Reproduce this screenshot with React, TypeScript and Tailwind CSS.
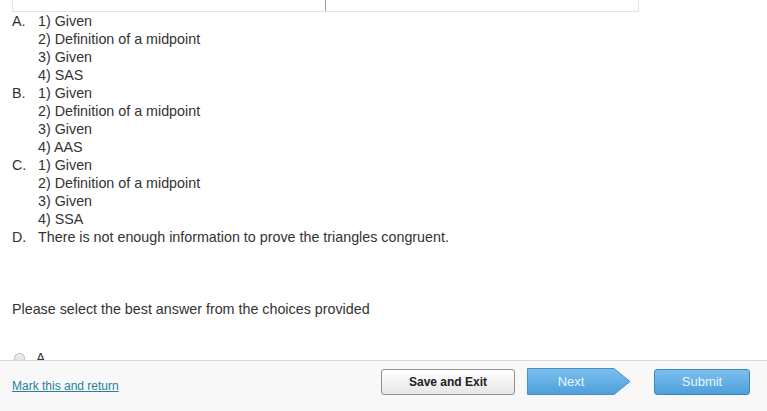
const choices = [
  { letter: "A.", lines: ["1) Given", "2) Definition of a midpoint", "3) Given", "4) SAS"] },
  { letter: "B.", lines: ["1) Given", "2) Definition of a midpoint", "3) Given", "4) AAS"] },
  { letter: "C.", lines: ["1) Given", "2) Definition of a midpoint", "3) Given", "4) SSA"] },
  { letter: "D.", lines: ["There is not enough information to prove the triangles congruent."] },
];

function NextButton() {
  return (
    <button className="relative w-[104px] h-[27px] text-[13px] text-[#eaf5ff] cursor-pointer">
      <svg className="absolute inset-0" width="104" height="27" viewBox="0 0 104 27">
        <defs>
          <linearGradient id="nextGrad" x1="0" y1="0" x2="0" y2="1">
            <stop offset="0" stopColor="#7cc0ee" />
            <stop offset="1" stopColor="#4d9fdc" />
          </linearGradient>
        </defs>
        <path d="M0.5 0.5 H87 L103 13.5 L87 26.5 H0.5 Z" fill="url(#nextGrad)" stroke="#4a8fc4" />
      </svg>
      <span className="relative pr-4">Next</span>
    </button>
  );
}

export default function App() {
  return (
    <div className="h-[411px] w-[767px] flex flex-col bg-white text-[#333] font-['Liberation_Sans',Arial,sans-serif] overflow-hidden">
      <div className="h-[360px] overflow-hidden px-3">
        <div className="w-[627px] h-[12px] grid grid-cols-2 border-x border-b border-[#e3e3e3]">
          <div className="border-r border-[#a0a0a0]" />
          <div />
        </div>

        <div className="text-[14.3px] leading-[18px]">
          {choices.map((c) => (
            <div key={c.letter} className="flex">
              <div className="w-[26px]">{c.letter}</div>
              <div>
                {c.lines.map((l, i) => (
                  <div key={i}>{l}</div>
                ))}
              </div>
            </div>
          ))}
        </div>

        <p className="mt-[54px] text-[14.3px] leading-[18px]">Please select the best answer from the choices provided</p>

        <div className="mt-[31px] flex items-center gap-[11px] pl-[2px] text-[14px] leading-[18px]">
          <span className="w-[11px] h-[11px] rounded-full border border-[#b5b5b5] bg-gradient-to-b from-[#f4f4f4] to-[#d8d8d8]" />
          <span>A</span>
        </div>
      </div>

      <div className="flex-1 border-t border-[#dcdcdc] bg-[#f8f8f8] flex items-start px-3 pt-[7px]">
        <a href="#" className="text-[12px] text-[#2a7f9c] underline mt-[9px]">Mark this and return</a>
        <div className="ml-auto flex items-center mr-[5px]">
          <button className="w-[134px] h-[26px] rounded-[3px] border border-[#8f8f8f] bg-gradient-to-b from-white to-[#e6e6e6] text-[12px] font-bold text-[#222]">
            Save and Exit
          </button>
          <div className="ml-3">
            <NextButton />
          </div>
          <button className="ml-[23px] w-[96px] h-[26px] rounded-[3px] border border-[#3f86bd] bg-gradient-to-b from-[#7cc0ee] to-[#4d9fdc] text-[13px] text-[#eaf5ff]">
            Submit
          </button>
        </div>
      </div>
    </div>
  );
}
